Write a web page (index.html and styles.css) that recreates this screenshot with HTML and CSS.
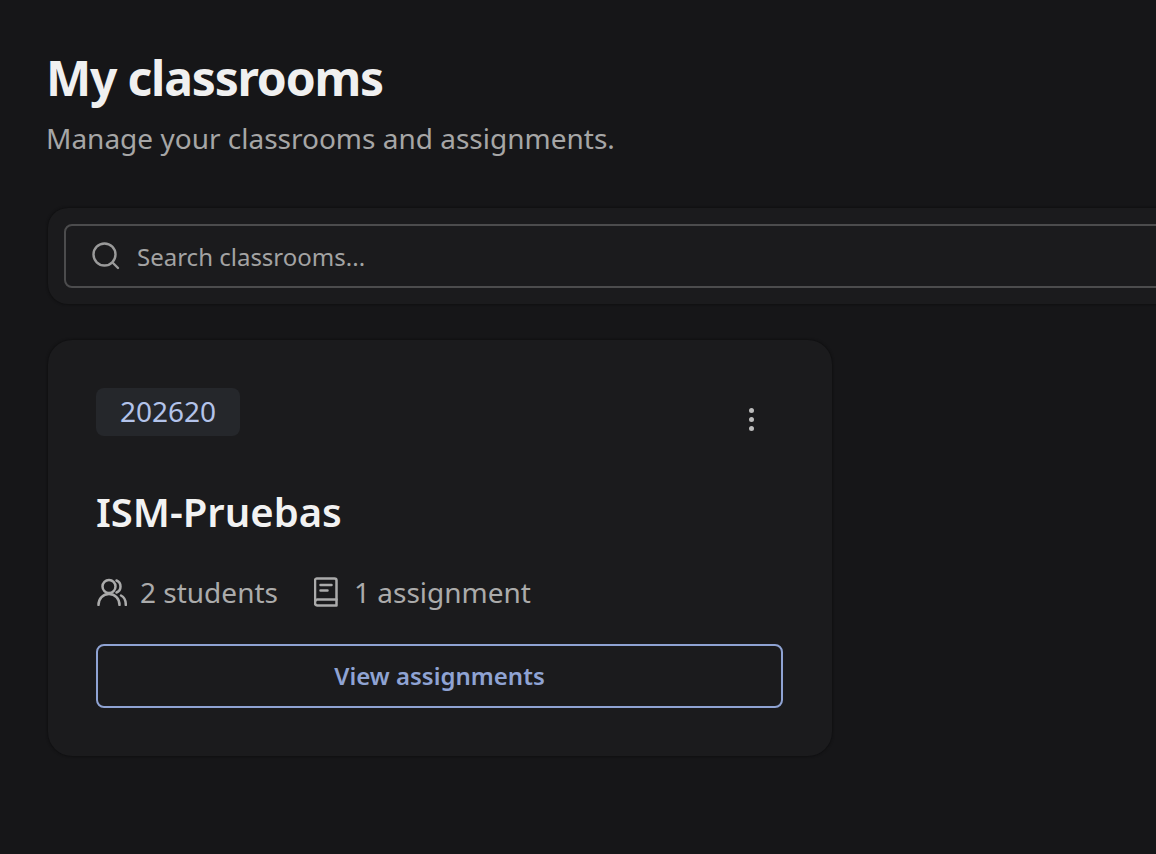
FILE: index.html
```html
<!DOCTYPE html>
<html lang="en">
<head>
  <meta charset="UTF-8" />
  <title>My classrooms</title>
  <link rel="stylesheet" href="styles.css">
</head>
<body>
  <main class="page">
    <header class="page-head">
      <h1 class="page-title">My classrooms</h1>
      <p class="page-subtitle">Manage your classrooms and assignments.</p>
    </header>

    <div class="search-panel">
      <label class="search-box">
        <svg class="search-icon" viewBox="0 0 28 28" fill="none" stroke="currentColor" stroke-width="2.400" stroke-linecap="round">
          <circle cx="12.500" cy="12.500" r="11"/>
          <path d="M20.500 20.500 26 26"/>
        </svg>
        <span class="search-placeholder">Search classrooms...</span>
      </label>
    </div>

    <div class="class-grid">
      <article class="class-card">
        <div class="card-top">
          <span class="term-badge">202620</span>
          <button class="more-btn" aria-label="More options">
            <span class="dot"></span><span class="dot"></span><span class="dot"></span>
          </button>
        </div>
        <h2 class="card-title">ISM-Pruebas</h2>
        <div class="card-meta">
          <span class="meta-item">
            <svg class="meta-icon" viewBox="0 0 30 28" fill="none" stroke="currentColor" stroke-width="2.500" stroke-linecap="round" stroke-linejoin="round">
              <circle cx="12" cy="8.500" r="6.500"/>
              <path d="M1.500 27c0-6.500 4.500-11 10.500-11s10.500 4.500 10.500 11"/>
              <path d="M19.500 2.500c2.500 1 4 3.300 4 6s-1.500 5-4 6"/>
              <path d="M24 17.500c3 1.500 4.800 5 4.800 9.500"/>
            </svg>
            2 students
          </span>
          <span class="meta-item">
            <svg class="meta-icon book" viewBox="0 0 24 30" fill="none" stroke="currentColor" stroke-width="2.500" stroke-linecap="round" stroke-linejoin="round">
              <path d="M3.500 1.500h17a2 2 0 0 1 2 2v25h-19a2.500 2.500 0 0 1-2.500-2.500V3.500a2 2 0 0 1 2.500-2z"/>
              <path d="M1 24.500a2.500 2.500 0 0 1 2.500-2h19"/>
              <path d="M6.500 8h11M6.500 13.500h7"/>
            </svg>
            1 assignment
          </span>
        </div>
        <button class="view-btn">View assignments</button>
      </article>
    </div>
  </main>
</body>
</html>
```

FILE: styles.css
```css
* {
  box-sizing: border-box;
}

html, body {
  overflow: hidden;
}

body {
  margin: 0;
  height: 854px;
  background: #161618;
  font-family: "Noto Sans", sans-serif;
  color: #f2f2f2;
}

.page {
  width: 1700px;
  padding: 44px 48px 0;
}

.page-head {
  margin-left: -2px;
}

.page-title {
  margin: 0;
  font-size: 48px;
  line-height: 68px;
  font-weight: 700;
  letter-spacing: -1.2px;
  color: #f0f0f0;
}

.page-subtitle {
  margin: 7px 0 0;
  font-size: 28px;
  line-height: 38px;
  color: #a6a6a6;
}

.search-panel {
  margin-top: 51px;
  padding: 16px;
  background: #1b1b1d;
  border-radius: 20px;
  box-shadow: 0 0 3px #0a0a0b;
}

.search-box {
  display: flex;
  align-items: center;
  gap: 17px;
  height: 64px;
  padding: 0 26px;
  border: 2px solid #4c4c4d;
  border-radius: 8px;
}

.search-icon {
  width: 28px;
  height: 28px;
  color: #9a9a9a;
}

.search-placeholder {
  font-size: 24px;
  color: #a3a3a3;
}

.class-grid {
  margin-top: 36px;
  display: grid;
  grid-template-columns: 784px;
}

.class-card {
  height: 416px;
  padding: 48px;
  background: #1b1b1d;
  border-radius: 24px;
  box-shadow: 0 0 3px #0a0a0b;
}

.card-top {
  display: flex;
  justify-content: space-between;
  align-items: flex-start;
  height: 48px;
}

.term-badge {
  height: 48px;
  padding: 0 24px;
  line-height: 47px;
  font-size: 28px;
  color: #b3c3ea;
  background: #25272b;
  border-radius: 8px;
}

.more-btn {
  display: flex;
  flex-direction: column;
  align-items: center;
  gap: 4px;
  margin: 20px 30px 0 0;
  padding: 0;
  background: none;
  border: none;
}

.dot {
  width: 5px;
  height: 5px;
  border-radius: 50%;
  background: #bcbcbc;
}

.card-title {
  margin: 49px 0 0;
  font-size: 40px;
  line-height: 54px;
  font-weight: 600;
  color: #f2f2f2;
}

.card-meta {
  display: flex;
  gap: 36px;
  margin-top: 34px;
  font-size: 28px;
  line-height: 38px;
  color: #ababab;
}

.meta-item {
  display: flex;
  align-items: center;
  gap: 13px;
}

.meta-icon {
  width: 30px;
  height: 28px;
  margin-left: 1px;
}

.meta-icon.book {
  width: 24px;
  height: 30px;
  margin-left: 0;
  margin-right: 3px;
}

.view-btn {
  display: block;
  width: 687px;
  height: 64px;
  margin-top: 33px;
  padding: 0 0 2px;
  background: none;
  border: 2px solid #8fa3d3;
  border-radius: 8px;
  font-family: inherit;
  font-size: 24px;
  font-weight: 600;
  color: #8fa3d3;
}
```
